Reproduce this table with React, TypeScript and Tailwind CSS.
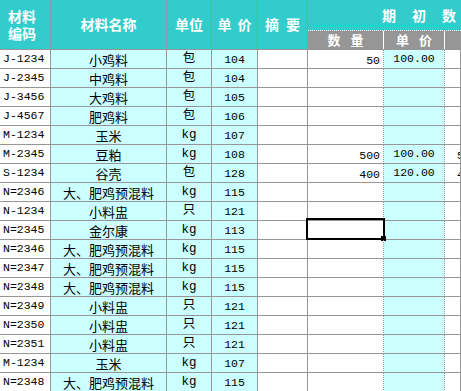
const cjk = "font-['Noto_Sans_CJK_SC',sans-serif]";
const mono = "font-['Liberation_Mono','Noto_Sans_CJK_SC',monospace]";

type Row = [string, string, string, string, string?, string?, string?];

const rows: Row[] = [
  ["J-1234", "小鸡料", "包", "104", "50", "100.00"],
  ["J-2345", "中鸡料", "包", "104"],
  ["J-3456", "大鸡料", "包", "105"],
  ["J-4567", "肥鸡料", "包", "106"],
  ["M-1234", "玉米", "kg", "107"],
  ["M-2345", "豆粕", "kg", "108", "500", "100.00", "500"],
  ["S-1234", "谷壳", "包", "128", "400", "120.00", "400"],
  ["N=2346", "大、肥鸡预混料", "kg", "115"],
  ["N-1234", "小料盅", "只", "121"],
  ["N=2345", "金尔康", "kg", "113"],
  ["N=2346", "大、肥鸡预混料", "kg", "115"],
  ["N=2347", "大、肥鸡预混料", "kg", "115"],
  ["N=2348", "大、肥鸡预混料", "kg", "115"],
  ["N=2349", "小料盅", "只", "121"],
  ["N=2350", "小料盅", "只", "121"],
  ["N=2351", "小料盅", "只", "121"],
  ["M-1234", "玉米", "kg", "107"],
  ["N=2348", "大、肥鸡预混料", "kg", "115"],
];

const cell = "h-full border-r border-b border-[#969696] flex items-center shrink-0";
const head = "h-full border-r border-b border-[#969696] flex items-center justify-center shrink-0 text-white font-bold text-[14px]";

const App = () => {
  return (
    <div className="w-[461px] h-[391px] overflow-hidden bg-white text-black">
      {/* header */}
      <div className={`flex h-[50px] bg-[#33cccc] ${cjk}`}>
        <div className={`${head} w-[51px] !justify-start pl-[8px]`}>
          <div className="flex flex-col">
            <span className="h-[17px] leading-[17px]">材料</span>
            <span className="h-[17px] leading-[17px]">编码</span>
          </div>
        </div>
        <div className={`${head} w-[116px]`}>材料名称</div>
        <div className={`${head} w-[45px]`}>单位</div>
        <div className={`${head} w-[46px] gap-[6px]`}>
          <span>单</span>
          <span>价</span>
        </div>
        <div className={`${head} w-[50px] gap-[7px]`}>
          <span>摘</span>
          <span>要</span>
        </div>
        <div className="flex-1 flex flex-col min-w-0">
          <div className="h-[31px] border-b border-dotted border-white flex items-center pl-[74px] gap-[16px] text-white font-bold text-[14px] whitespace-nowrap">
            <span>期</span>
            <span>初</span>
            <span>数</span>
          </div>
          <div className="h-[19px] flex bg-[#969696] border-b border-[#969696] text-white font-bold text-[13px]">
            <div className="w-[76px] shrink-0 border-r border-white flex items-center justify-center gap-[10px]">
              <span>数</span>
              <span>量</span>
            </div>
            <div className="w-[61px] shrink-0 border-r border-white flex items-center justify-center gap-[10px]">
              <span>单</span>
              <span>价</span>
            </div>
            <div className="flex-1" />
          </div>
        </div>
      </div>

      {/* body */}
      {rows.map((r, i) => (
        <div key={i} className="flex h-[19px]">
          <div className={`${cell} w-[51px] pl-[3px] ${mono} text-[11.5px]`}>{r[0]}</div>
          <div className={`${cell} w-[116px] justify-center bg-[#ccffff] ${cjk} text-[13px] pt-[1px]`}>{r[1]}</div>
          <div className={`${cell} w-[45px] justify-center bg-[#ccffff] ${mono} text-[12.5px] pt-[1px]`}>{r[2]}</div>
          <div className={`${cell} w-[46px] justify-center bg-[#ccffff] ${mono} text-[11.5px] pt-[1px]`}>{r[3]}</div>
          <div className={`${cell} w-[50px]`} />
          <div className={`${cell} w-[76px] justify-end pr-[3px] pt-[3px] [border-right-style:dotted] relative ${mono} text-[11.5px]`}>
            {r[4]}
            {i === 9 && (
              <>
                <div className="absolute left-[-2px] top-[-3px] w-[79px] h-[22px] border-2 border-black" />
                <div className="absolute left-[73px] top-[15px] w-[5px] h-[5px] bg-black" />
              </>
            )}
          </div>
          <div className={`${cell} w-[61px] justify-center bg-[#ccffff] [border-right-style:dotted] ${mono} text-[11.5px]`}>{r[5]}</div>
          <div className={`${cell} flex-1 !shrink pl-[12px] pt-[3px] whitespace-nowrap overflow-hidden ${mono} text-[11.5px]`}>{r[6]}</div>
        </div>
      ))}
    </div>
  );
};

export default App;
